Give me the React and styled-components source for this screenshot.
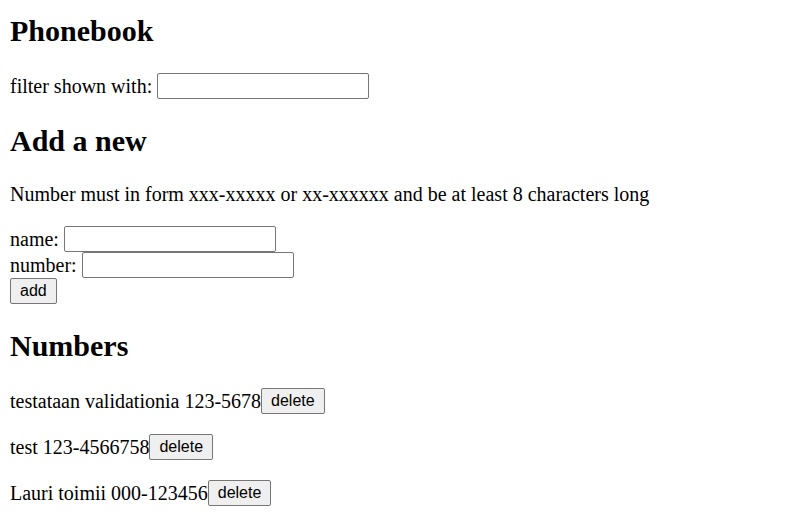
import React from "react";
import styled, { createGlobalStyle } from "styled-components";

const GlobalStyle = createGlobalStyle`
  body {
    margin: 10px;
    font-family: "Liberation Serif", "Times New Roman", serif;
    font-size: 20px;
    color: #000;
    background: #fff;
  }
`;

const Title = styled.h2`
  font-size: 30px;
  font-weight: bold;
  margin: ${(p) => (p.$first ? "4px 0 25px" : "25px 0")};
`;

const Row = styled.div`
  display: flex;
  align-items: center;
  gap: 5px;
  margin: ${(p) => (p.$spaced ? "20px 0" : "0")};
`;

const Text = styled.p`
  margin: 20px 0;
`;

const Field = styled.input`
  width: 212px;
  height: 26px;
  padding: 1px 2px;
  border: 1px solid #767676;
  border-radius: 2px;
  box-sizing: border-box;
  font-size: 16px;
`;

const Button = styled.button`
  font-family: "Liberation Sans", Arial, sans-serif;
  font-size: 16px;
  height: 26px;
  padding: 1px 9px;
  background: #efefef;
  border: 1px solid #767676;
  border-radius: 2px;
  color: #000;
`;

const PersonLine = styled.p`
  margin: 20px 0;
  display: flex;
  align-items: center;
`;

const people = [
  { name: "testataan validationia", number: "123-5678" },
  { name: "test", number: "123-4566758" },
  { name: "Lauri toimii", number: "000-123456" },
];

export default function App() {
  return (
    <>
      <GlobalStyle />
      <Title $first>Phonebook</Title>
      <Row $spaced>
        filter shown with: <Field />
      </Row>
      <Title>Add a new</Title>
      <Text>
        Number must in form xxx-xxxxx or xx-xxxxxx and be at least 8 characters long
      </Text>
      <form>
        <Row>
          name: <Field />
        </Row>
        <Row>
          number: <Field />
        </Row>
        <div>
          <Button type="button">add</Button>
        </div>
      </form>
      <Title>Numbers</Title>
      {people.map((p) => (
        <PersonLine key={p.name}>
          {p.name} {p.number}
          <Button type="button">delete</Button>
        </PersonLine>
      ))}
    </>
  );
}
